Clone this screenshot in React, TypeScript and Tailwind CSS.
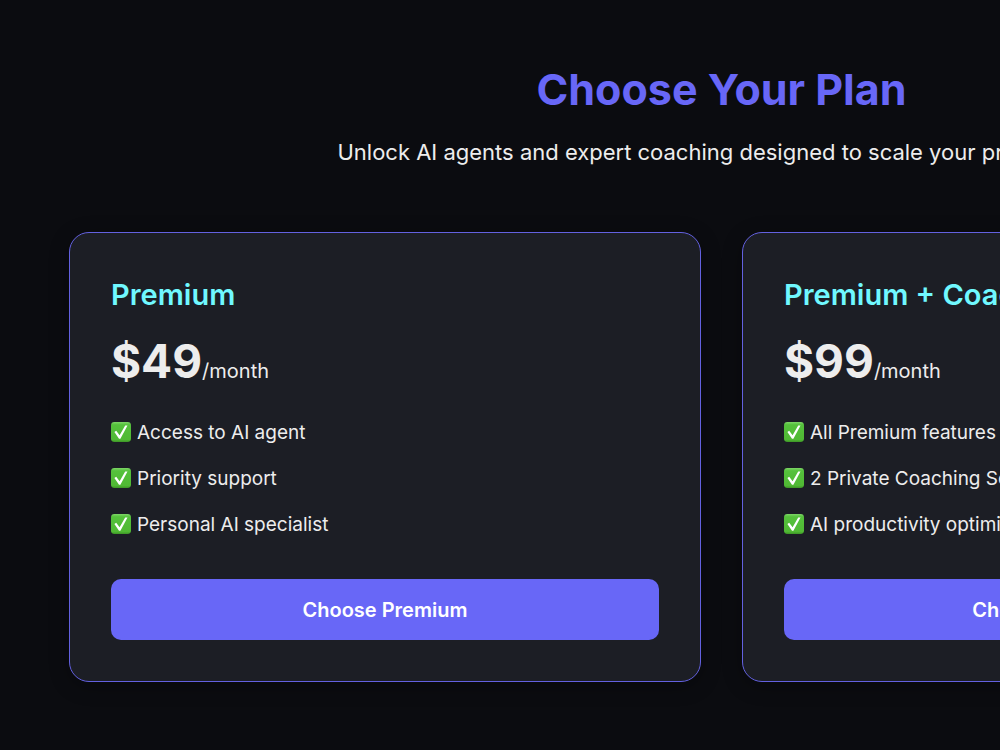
interface Plan {
  id: string;
  name: string;
  price: string;
  features: string[];
  cta: string;
}

const plans: Plan[] = [
  {
    id: 'premium',
    name: 'Premium',
    price: '$49',
    features: ['Access to AI agent', 'Priority support', 'Personal AI specialist'],
    cta: 'Choose Premium',
  },
  {
    id: 'coaching',
    name: 'Premium + Coaching',
    price: '$99',
    features: ['All Premium features', '2 Private Coaching Sessions', 'AI productivity optimization'],
    cta: 'Choose Coaching',
  },
];

const CheckBadge = () => (
  <svg viewBox="0 0 20 20" className="mb-0.5 h-5 w-5 shrink-0" aria-hidden="true">
    <defs>
      <linearGradient id="check-fill" x1="0" y1="0" x2="0" y2="1">
        <stop offset="0" stopColor="#7fd668" />
        <stop offset="0.14" stopColor="#55c13c" />
        <stop offset="0.88" stopColor="#50b934" />
        <stop offset="1" stopColor="#3d9426" />
      </linearGradient>
    </defs>
    <rect width="20" height="20" rx="3.4" fill="url(#check-fill)" />
    <path d="M16.5 3.4 L9.4 16.8 H8 L3.4 10 L5.2 8.8 L8.6 13.2 L14.2 3.4 Z" fill="#fff" />
  </svg>
);

const PlanCard = ({ plan }: { plan: Plan }) => (
  <article className="rounded-[20px] border border-[#6361e0] bg-[#1c1e25] px-[41px] pt-10 pb-[41px] shadow-[0_4px_20px_rgba(0,0,0,0.3)]">
    <h2 className="text-[29px] leading-11 font-semibold text-[#70f8ff]">{plan.name}</h2>
    <p className="mt-3.5 text-[46px] leading-[60px] font-bold">
      {plan.price}
      <span className="text-xl font-normal">/month</span>
    </p>
    <ul className="mt-[26px] space-y-3.5 text-[19px] leading-8">
      {plan.features.map((feature) => (
        <li key={feature} className="flex items-center gap-1.5 whitespace-nowrap">
          <CheckBadge />
          {feature}
        </li>
      ))}
    </ul>
    <button
      type="button"
      className="mt-[38px] h-[61px] w-full rounded-[10px] bg-[#6867f7] text-xl font-semibold text-white hover:bg-[#5a58e6]"
    >
      {plan.cta}
    </button>
  </article>
);

export default function App() {
  return (
    <main className="min-h-screen overflow-hidden bg-[#0b0c10] font-['Inter','Liberation_Sans',sans-serif] text-[#ededed]">
      <section className="w-max min-w-full px-[69px] pt-[59px] pb-16">
        <header className="text-center">
          <h1 className="text-[43px] leading-[60px] font-bold text-[#6867f7]">Choose Your Plan</h1>
          <p className="mt-4 text-[22px] leading-[34px]">
            Unlock AI agents and expert coaching designed to scale your productivity
          </p>
        </header>
        <div className="mt-[63px] grid grid-cols-[repeat(2,minmax(632px,1fr))] gap-[41px]">
          {plans.map((plan) => (
            <PlanCard key={plan.id} plan={plan} />
          ))}
        </div>
      </section>
    </main>
  );
}
